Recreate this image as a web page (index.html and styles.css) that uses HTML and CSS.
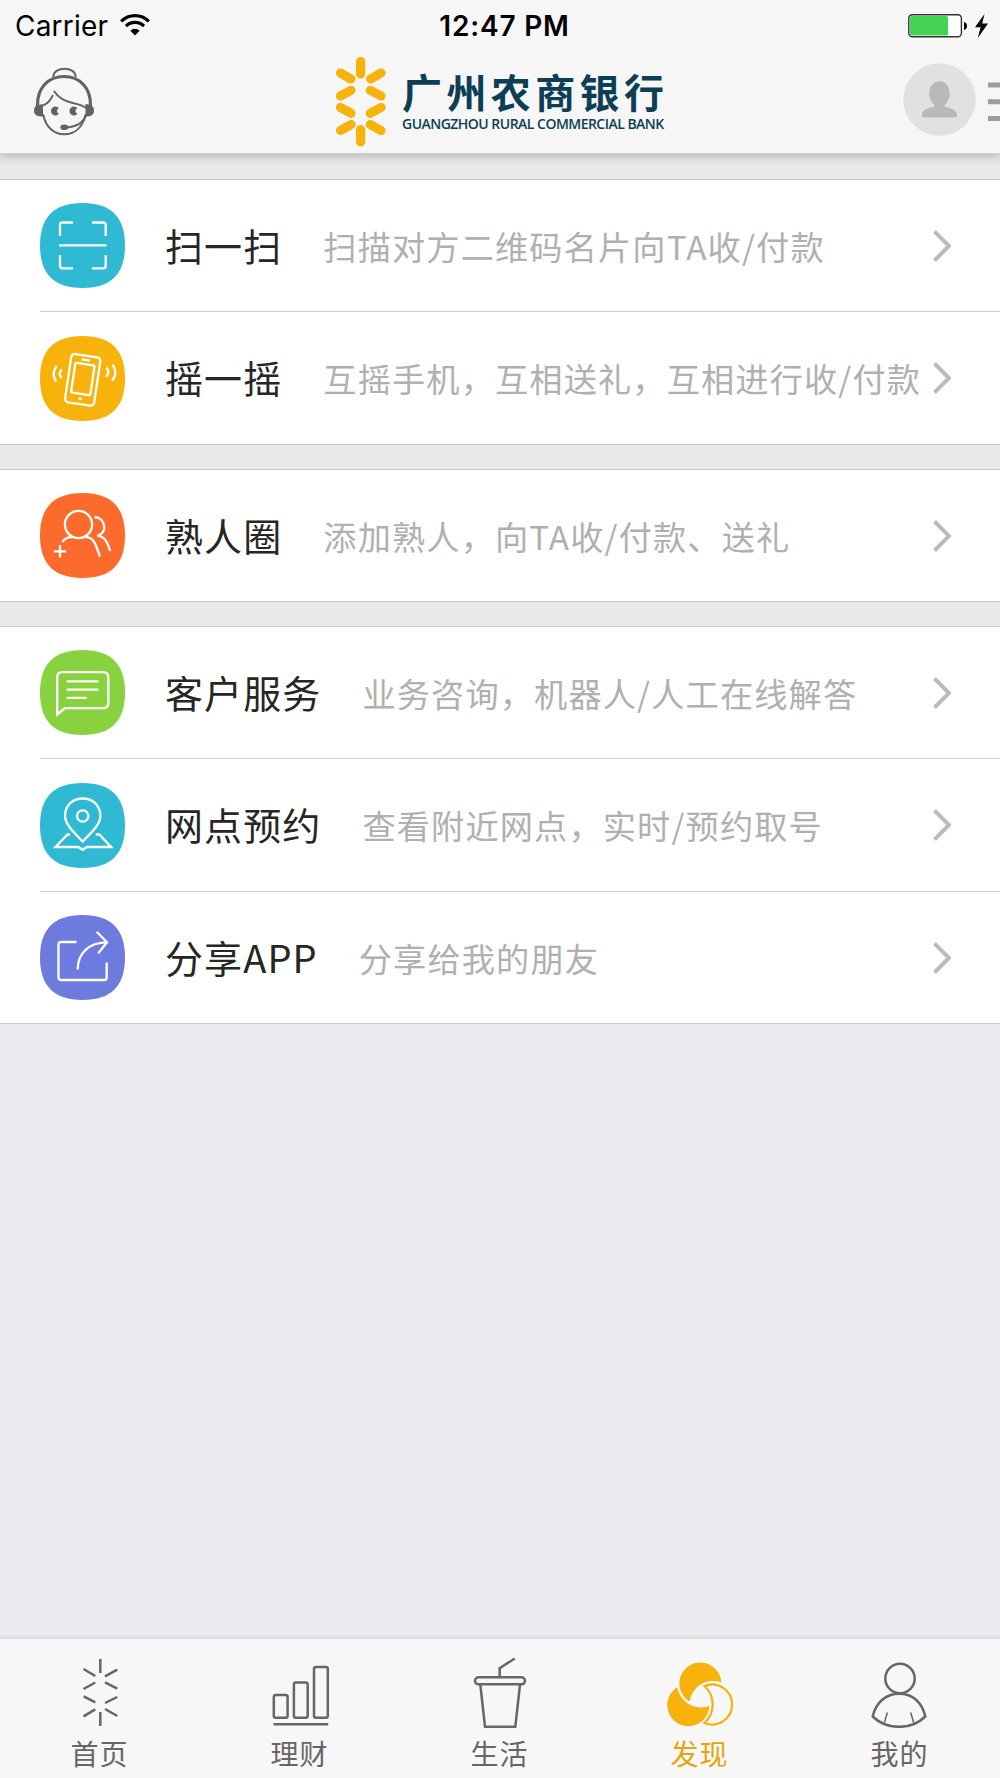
FILE: index.html
```html
<!DOCTYPE html>
<html lang="zh-CN">
<head>
  <meta charset="UTF-8">
  <meta name="viewport" content="width=device-width, initial-scale=1">
  <title>发现</title>
  <link rel="stylesheet" href="styles.css">
</head>
<body>
  <header class="header">
    <div class="status-bar">
      <div class="status-left">
        <span class="carrier">Carrier</span>
        <svg class="wifi" width="30" height="22" viewBox="0 0 30 22">
          <path d="M1.2 7.4a19.5 19.5 0 0 1 27.6 0" fill="none" stroke="#000" stroke-width="3.2"/>
          <path d="M6 12.2a12.7 12.7 0 0 1 18 0" fill="none" stroke="#000" stroke-width="3.2"/>
          <path d="M15 21.5l-4.6-4.8a6.5 6.5 0 0 1 9.2 0z"/>
        </svg>
      </div>
      <span class="clock">12:47 PM</span>
      <div class="status-right">
        <svg width="60" height="24" viewBox="0 0 60 24">
          <rect x="0.8" y="0.8" width="52.6" height="22" rx="3.5" fill="#fff" stroke="#333" stroke-width="1.4"/>
          <rect x="2" y="2" width="38" height="19.6" rx="1.5" fill="#43d551"/>
          <path d="M56 8c2.2.4 3 2 3 4s-.8 3.600-3 4z"/>
        </svg>
        <svg width="13" height="24" viewBox="0 0 13 24">
          <path d="M9.500 0L0 13.200h5.600L2.800 24 13 9.600H7.200z"/>
        </svg>
      </div>
    </div>

    <div class="nav-bar">
      <svg class="service" width="64" height="72" viewBox="0 0 64 72" fill="none" stroke="#636363" stroke-width="2" stroke-linecap="round">
        <path d="M21.300 10.500C22 0 43 0 43.700 10.500"/>
        <path d="M5.500 40C5 22 16 10.500 32 10.500S59 22 58.500 40" stroke-width="3.200"/>
        <path d="M11.300 49C14 61.500 22 68.300 32.300 68.300S50.500 61.500 53.500 49"/>
        <path d="M8 40c6.500-.5 10-4.500 12.700-10.300"/>
        <path d="M22.300 25.500c4 6 9 9.500 18.400 11.500 7 1.500 11 3 14.300 5.500"/>
        <path d="M33 61.300c10 0 18-3.600 21.500-13"/>
        <g fill="#636363" stroke="none">
          <path d="M2 44.500c0-4 2.500-6 9-6v12c-6.500 0-9-2-9-6z"/>
          <path d="M62 44.500c0-4-2.500-6-8.500-6.500v12.500c6 0 8.500-2 8.500-6z"/>
          <path d="M27 42.300a4.500 4.500 0 1 0 0 5.400c-1.500-.6-2-1.500-2-2.700s.5-2.100 2-2.700z"/>
          <path d="M45.500 42.300a4.500 4.500 0 1 0 0 5.400c-1.500-.6-2-1.500-2-2.700s.5-2.100 2-2.700z"/>
          <ellipse cx="32.300" cy="61.300" rx="4" ry="2.800"/>
        </g>
      </svg>

      <div class="logo">
        <svg width="52" height="90" viewBox="0 0 52 90" stroke="#f8b20c" stroke-width="9.200" stroke-linecap="round">
          <path d="M25.600 4.600v12.500M25.600 72.500V85M5.500 16l10.300 6M46 16l-10.300 6M16 33.300L5.500 39M35.300 33.300L46 39M5.500 50.500L16 56.300M46 50.500l-10.700 5.800M16 67.500L5.500 73.500M35.300 67.500L46 73.500"/>
        </svg>
        <div class="logo-text">
          <span class="logo-cn">广州农商银行</span>
          <span class="logo-en">GUANGZHOU RURAL COMMERCIAL BANK</span>
        </div>
      </div>

      <div class="nav-right">
        <svg class="avatar" width="73" height="73" viewBox="0 0 73 73">
          <circle cx="36.500" cy="36.500" r="36.200" fill="#e1e1e1"/>
          <path d="M36.500 18.200c6.300 0 10.200 5 10.200 12 0 5-2.200 9.300-5.200 11.800v1c2 2 12.500 2 12.500 9 0 1.500-.7 2.400-2.400 2.400H21.400c-1.700 0-2.400-.9-2.400-2.400 0-7 10.500-7 12.500-9v-1c-3-2.500-5.200-6.800-5.200-11.800 0-7 3.900-12 10.200-12z" fill="#b9b9b9"/>
        </svg>
        <svg width="12" height="40" viewBox="0 0 12 40" fill="#9d9d9d">
          <path d="M0 .5h12v5H0zM0 17.300h12v5H0zM0 34h12v5H0z"/>
        </svg>
      </div>
    </div>
  </header>

  <main>
    <section class="group">
      <a class="row">
        <svg class="icon cyan" viewBox="0 0 85 85">
          <path class="tile" d="M42.500 0C71 0 85 14 85 42.500S71 85 42.500 85 0 71 0 42.500 14 0 42.500 0z"/>
          <path d="M20 33V22q0-2.500 2.500-2.500H33M52 19.500h11.200q2.500 0 2.500 2.500v11M65.700 52.300v10.500q0 2.500-2.500 2.500H52M33 65.300H22.500q-2.500 0-2.500-2.500V52.300M19 42.300h47.500"/>
        </svg>
        <span class="title">扫一扫</span>
        <span class="desc">扫描对方二维码名片向TA收/付款</span>
        <svg class="arrow" viewBox="0 0 18 32"><path d="M1.500 1.500L16 16 1.500 30.500"/></svg>
      </a>
      <a class="row">
        <svg class="icon amber" viewBox="0 0 85 85">
          <path class="tile" d="M42.500 0C71 0 85 14 85 42.500S71 85 42.500 85 0 71 0 42.500 14 0 42.500 0z"/>
          <g transform="rotate(8.500 42.700 43.800)">
            <rect x="28" y="19.400" width="29.400" height="48.800" rx="3.500"/>
            <rect x="33" y="28" width="19.400" height="30" rx="1.500"/>
            <path d="M38.500 23.800h8.500M41.500 63h3"/>
          </g>
          <path d="M16.700 30q-6 7.500-.5 15.500M21.800 33.500q-4 4.200-.3 8.500M72.700 28.700q5.500 8-.5 16M66.300 31.500q4.200 4.800-.3 9.500"/>
        </svg>
        <span class="title">摇一摇</span>
        <span class="desc">互摇手机，互相送礼，互相进行收/付款</span>
        <svg class="arrow" viewBox="0 0 18 32"><path d="M1.500 1.500L16 16 1.500 30.500"/></svg>
      </a>
    </section>

    <section class="group">
      <a class="row">
        <svg class="icon orange" viewBox="0 0 85 85">
          <path class="tile" d="M42.500 0C71 0 85 14 85 42.500S71 85 42.500 85 0 71 0 42.500 14 0 42.500 0z"/>
          <circle cx="38.500" cy="31.500" r="13.600"/>
          <path d="M22.300 49q3.500-5 9.700-4.900M45.500 44.200C54 44 56 52 60 63.700M54.500 24c12 1 13 17 2.800 18.700C64.500 43.500 67 48 70.200 58M13.800 58.300h12.400M20 52.100v12.400"/>
        </svg>
        <span class="title">熟人圈</span>
        <span class="desc">添加熟人，向TA收/付款、送礼</span>
        <svg class="arrow" viewBox="0 0 18 32"><path d="M1.500 1.500L16 16 1.500 30.500"/></svg>
      </a>
    </section>

    <section class="group">
      <a class="row">
        <svg class="icon green" viewBox="0 0 85 85">
          <path class="tile" d="M42.500 0C71 0 85 14 85 42.500S71 85 42.500 85 0 71 0 42.500 14 0 42.500 0z"/>
          <path d="M17.200 64.500V27.500q0-5.300 5.300-5.300H63q5.300 0 5.300 5.300V53q0 5.200-5.300 5.200H25zM26.700 31.300h31.600M26.700 39.700h31.600M26.700 47.800h20"/>
        </svg>
        <span class="title">客户服务</span>
        <span class="desc">业务咨询，机器人/人工在线解答</span>
        <svg class="arrow" viewBox="0 0 18 32"><path d="M1.500 1.500L16 16 1.500 30.500"/></svg>
      </a>
      <a class="row">
        <svg class="icon cyan" viewBox="0 0 85 85">
          <path class="tile" d="M42.500 0C71 0 85 14 85 42.500S71 85 42.500 85 0 71 0 42.500 14 0 42.500 0z"/>
          <path d="M42.700 58.500C36 51.500 25 42 25 33c0-11 8-17.500 17.700-17.500S60.400 22 60.400 33c0 9-11 18.500-17.700 25.500z"/>
          <circle cx="42.700" cy="33" r="5.700"/>
          <path d="M30 51.500h-2.500L15.500 64h22.800l4.400 2.800L47 64h24.200L59.300 51.500h-3.600"/>
        </svg>
        <span class="title">网点预约</span>
        <span class="desc">查看附近网点，实时/预约取号</span>
        <svg class="arrow" viewBox="0 0 18 32"><path d="M1.500 1.500L16 16 1.500 30.500"/></svg>
      </a>
      <a class="row">
        <svg class="icon violet" viewBox="0 0 85 85">
          <path class="tile" d="M42.500 0C71 0 85 14 85 42.500S71 85 42.500 85 0 71 0 42.500 14 0 42.500 0z"/>
          <path d="M36.500 27H21q-2.500 0-2.500 2.500v33q0 2.500 2.500 2.500h43.200q2.500 0 2.500-2.500V47.500M37.700 54.500C37.700 38 49 27.500 67 27.300M56.700 16.800L67 27.300l-8.700 11"/>
        </svg>
        <span class="title">分享APP</span>
        <span class="desc">分享给我的朋友</span>
        <svg class="arrow" viewBox="0 0 18 32"><path d="M1.500 1.500L16 16 1.500 30.500"/></svg>
      </a>
    </section>
  </main>

  <nav class="tab-bar">
    <a class="tab">
      <svg viewBox="0 0 72 72">
        <path d="M36.300 3v14M36.300 56v14M19.500 13l11.800 7M53.300 13.700L41 20.300M31.300 26.500L19.500 33M41 26.300l12.300 6.400M19.700 40.300l11.600 6M53.300 41L41 47M31.300 53.300L19.500 60.300M41 53l12.300 7"/>
      </svg>
      <span>首页</span>
    </a>
    <a class="tab">
      <svg viewBox="0 0 72 72">
        <rect x="9.800" y="39" width="13.800" height="22.800" rx="2"/>
        <rect x="29.900" y="26.400" width="13.800" height="35.400" rx="2"/>
        <rect x="50" y="11" width="13.800" height="50.800" rx="2"/>
        <path d="M9.500 68.300h54.700"/>
      </svg>
      <span>理财</span>
    </a>
    <a class="tab">
      <svg viewBox="0 0 72 72">
        <rect x="11" y="21.300" width="50" height="7" rx="3.500"/>
        <path d="M16.300 28.500L21 70.800h30.300L56 28.500M35.700 21v-8.700l15-9.800"/>
      </svg>
      <span>生活</span>
    </a>
    <a class="tab active">
      <svg viewBox="0 0 72 72">
        <path class="solid" d="M57.300 26.300A21 21 0 1 0 25.500 45.500A24 24 0 0 1 57.300 26.300z"/>
        <path class="solid" d="M13.300 31.300A21 21 0 1 0 45.300 50A24 24 0 0 1 13.300 31.300z"/>
        <path d="M40.500 30A20 20 0 1 1 40.500 67A25 25 0 0 0 40.500 30z" stroke-width="2.200"/>
      </svg>
      <span>发现</span>
    </a>
    <a class="tab">
      <svg viewBox="0 0 72 72">
        <circle cx="36" cy="22.500" r="14.700"/>
        <path d="M8.700 60.500C12 46 22 37.800 35.300 37.800S58 46 61.300 60.500C47 74.300 23 74.300 8.700 60.500z"/>
        <path d="M23.300 56.500l-2.800 10M46.700 56.500l2.900 10" stroke-width="1.500"/>
      </svg>
      <span>我的</span>
    </a>
  </nav>
</body>
</html>
```

FILE: styles.css
```css
* {
  margin: 0;
  padding: 0;
  box-sizing: border-box;
}

body {
  font-family: "Noto Sans CJK SC", sans-serif;
  background: #ebeaf0;
  width: 1000px;
  height: 1778px;
  display: flex;
  flex-direction: column;
  overflow: hidden;
}

svg {
  display: block;
  flex-shrink: 0;
}

.header {
  position: relative;
  height: 154px;
  background: #f6f6f6;
  border-bottom: 1px solid #cfcfcf;
  box-shadow: 0 3px 9px rgba(0, 0, 0, 0.2);
}

/* status bar */
.status-bar {
  display: grid;
  grid-template-columns: 1fr auto 1fr;
  align-items: center;
  height: 50px;
  padding: 0 12px 0 15px;
  font-family: Inter, sans-serif;
  font-size: 28px;
  line-height: 50px;
  color: #000;
}

.status-left,
.status-right {
  display: flex;
  align-items: center;
}

.status-left {
  gap: 12px;
}

.status-right {
  justify-content: flex-end;
  gap: 7px;
}

.carrier {
  letter-spacing: 0.2px;
  padding-top: 1px;
}

.wifi {
  margin-bottom: 1px;
}

.clock {
  font-weight: 600;
  letter-spacing: 0.8px;
  padding: 1px 0 0 6px;
}

/* nav bar */
.nav-bar {
  display: grid;
  grid-template-columns: 1fr auto 1fr;
  align-items: center;
  height: 103px;
}

.service {
  margin-left: 32px;
}

.logo {
  display: flex;
  align-items: center;
  gap: 15px;
  width: 330px;
}

.logo-text {
  display: flex;
  flex-direction: column;
  color: #0c3f55;
  white-space: nowrap;
}

.logo-cn {
  font-size: 40px;
  font-weight: 700;
  line-height: 40px;
  letter-spacing: 4.4px;
  margin-bottom: 4px;
}

.logo-en {
  font-family: "Open Sans", sans-serif;
  font-size: 14px;
  font-weight: 600;
  line-height: 18px;
  letter-spacing: -0.52px;
}

.nav-right {
  display: flex;
  align-items: center;
  justify-content: flex-end;
  gap: 12px;
}

.avatar {
  margin-bottom: 5px;
}

/* list */
main {
  display: flex;
  flex-direction: column;
  gap: 24px;
  padding-top: 25px;
  background: #e9e9e9;
}

.group {
  background: #fff;
  border-top: 1px solid #c8c8cb;
  border-bottom: 1px solid #c8c8cb;
}

.row {
  display: flex;
  align-items: center;
  height: 131px;
  margin-left: 40px;
  padding-right: 49px;
  white-space: nowrap;
}

.row + .row {
  height: 133px;
  border-top: 1px solid #cfcfd1;
}

.row + .row + .row {
  height: 132px;
}

.icon {
  width: 85px;
  height: 85px;
  margin-right: 40px;
  fill: none;
  stroke: #fff;
  stroke-width: 2.3;
}

.tile {
  stroke: none;
}

.cyan .tile {
  fill: #2fb9d3;
}

.amber .tile {
  fill: #f8b20c;
}

.orange .tile {
  fill: #fd6b2c;
}

.green .tile {
  fill: #88d240;
}

.violet .tile {
  fill: #6c7bdd;
}

.title {
  font-size: 38px;
  font-weight: 400;
  letter-spacing: 1.1px;
  color: #262626;
  margin-right: 41px;
  padding-bottom: 3px;
}

.desc {
  font-size: 33.2px;
  font-weight: 400;
  letter-spacing: 1.15px;
  color: #b0b0b0;
  padding-bottom: 1px;
}

.arrow {
  width: 18px;
  height: 32px;
  margin-left: auto;
  fill: none;
  stroke: #bbbac2;
  stroke-width: 4;
}

/* bottom tabs */
.tab-bar {
  display: flex;
  height: 140px;
  margin-top: auto;
  background: #f7f7f7;
  border-top: 1px solid #dededf;
  box-shadow: 0 -1px 3px rgba(0, 0, 0, 0.1);
}

.tab {
  flex: 1;
  display: flex;
  flex-direction: column;
  align-items: center;
  padding-top: 17px;
  font-size: 28px;
  line-height: 40px;
  letter-spacing: 1px;
  color: #666;
}

.tab svg {
  width: 72px;
  height: 72px;
  margin-bottom: 5px;
  fill: none;
  stroke: #666;
  stroke-width: 2.5;
}

.tab span {
  padding-right: 1px;
}

.tab.active {
  color: #e5a50d;
}

.tab.active svg {
  stroke: #f8b20c;
}

.tab .solid {
  fill: #f8b20c;
  stroke: none;
}
```
